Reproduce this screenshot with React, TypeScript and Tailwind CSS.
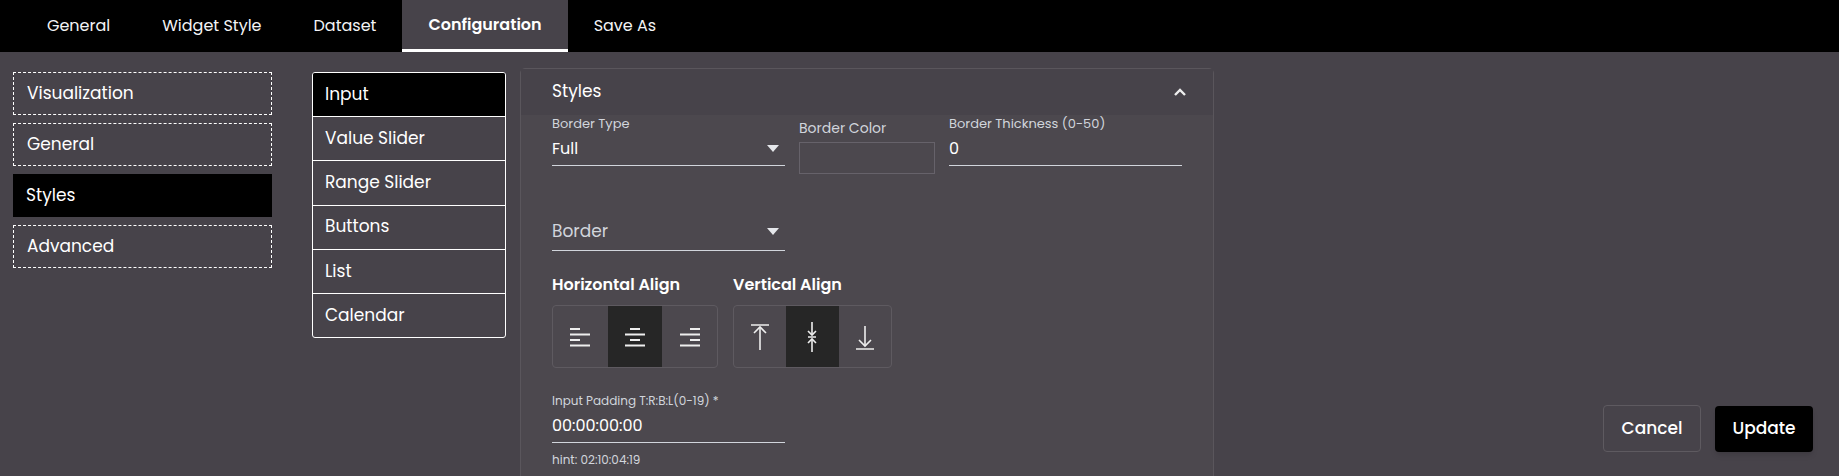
import React from 'react';

const font = { fontFamily: 'Poppins, Inter, "Noto Sans", sans-serif' };

const TABS = ['General', 'Widget Style', 'Dataset', 'Configuration', 'Save As'];
const SECTIONS = ['Visualization', 'General', 'Styles', 'Advanced'];
const ITEMS = ['Input', 'Value Slider', 'Range Slider', 'Buttons', 'List', 'Calendar'];

function Caret() {
  return (
    <svg width="12" height="8" viewBox="0 0 12 8" className="fill-gray-200">
      <path d="M0 0h12L6 7z" />
    </svg>
  );
}

function HIcon({ kind }: { kind: 'l' | 'c' | 'r' }) {
  const rows: Array<[number, number]> =
    kind === 'l' ? [[4, 14], [4, 24], [4, 14], [4, 24]]
    : kind === 'c' ? [[9, 19], [4, 24], [9, 19], [4, 24]]
    : [[14, 24], [4, 24], [14, 24], [4, 24]];
  return (
    <svg width="28" height="28" viewBox="0 0 28 28" stroke="#eee" strokeWidth="1.8">
      {rows.map(([a, b], i) => (
        <line key={i} x1={a} x2={b} y1={6 + i * 5.5} y2={6 + i * 5.5} />
      ))}
    </svg>
  );
}

function VIcon({ kind }: { kind: 't' | 'm' | 'b' }) {
  return (
    <svg width="28" height="32" viewBox="0 0 28 32" stroke="#eee" strokeWidth="1.6" fill="none">
      {kind === 't' && (
        <>
          <line x1="5" x2="23" y1="4" y2="4" />
          <line x1="14" x2="14" y1="6" y2="29" />
          <path d="M8 12l6-6 6 6" />
        </>
      )}
      {kind === 'm' && (
        <>
          <line x1="14" x2="14" y1="1" y2="14" />
          <path d="M10 10l4 4 4-4" />
          <line x1="10" x2="18" y1="16" y2="16" />
          <line x1="14" x2="14" y1="18" y2="31" />
          <path d="M10 22l4-4 4 4" />
        </>
      )}
      {kind === 'b' && (
        <>
          <line x1="14" x2="14" y1="5" y2="25" />
          <path d="M8 19l6 6 6-6" />
          <line x1="5" x2="23" y1="28" y2="28" />
        </>
      )}
    </svg>
  );
}

export default function App() {
  return (
    <div className="h-[476px] w-[1839px] overflow-hidden bg-[#47434a] text-white" style={font}>
      <nav className="flex h-[52px] bg-black">
        <div className="w-[21px]" />
        {TABS.map((t) => {
          const active = t === 'Configuration';
          return (
            <div
              key={t}
              className={`flex h-full items-center px-[26px] text-[16px] ${active ? 'border-b-[3px] border-white bg-[#47434a] font-semibold' : 'text-gray-100'}`}
            >
              {t}
            </div>
          );
        })}
      </nav>

      <div className="flex">
        <div className="ml-[13px] mt-[20px] flex w-[259px] flex-col gap-[8px]">
          {SECTIONS.map((s) => (
            <div
              key={s}
              className={`flex h-[43px] items-center px-[13px] text-[17px] ${s === 'Styles' ? 'bg-black' : 'border border-dashed border-white'}`}
            >
              {s}
            </div>
          ))}
        </div>

        <div className="ml-[40px] mt-[20px] flex h-[266px] w-[194px] flex-col overflow-hidden rounded-[3px] border border-white">
          {ITEMS.map((s, i) => (
            <div
              key={s}
              className={`flex flex-1 items-center px-[12px] text-[17px] ${i > 0 ? 'border-t border-white' : ''} ${i === 0 ? 'bg-black' : ''}`}
            >
              {s}
            </div>
          ))}
        </div>

        <div className="ml-[14px] mt-[16px] h-[420px] w-[694px] rounded-t-[5px] border border-[#5a565c] bg-[#4c484e]">
          <div className="flex h-[46px] items-center justify-between bg-[#47434a] pl-[31px] pr-[26px] text-[17px]">
            <span>Styles</span>
            <svg width="14" height="10" viewBox="0 0 14 10" fill="none" stroke="#eee" strokeWidth="2.4">
              <path d="M2 8l5-5 5 5" />
            </svg>
          </div>

          <div className="pl-[31px]">
            <div className="flex gap-[14px]">
              <div className="w-[233px]">
                <div className="text-[13px] leading-[18px] text-gray-300">Border Type</div>
                <div className="flex h-[33px] items-center justify-between border-b border-gray-300 pr-[6px] text-[16px]">
                  <span>Full</span>
                  <Caret />
                </div>
              </div>
              <div className="w-[136px]">
                <div className="mt-[3px] text-[14px] leading-[20px] text-gray-300">Border Color</div>
                <div className="mt-[4px] h-[32px] border border-[#66626a]" />
              </div>
              <div className="w-[233px]">
                <div className="text-[13px] leading-[18px] text-gray-300">Border Thickness (0-50)</div>
                <div className="flex h-[33px] items-center border-b border-gray-300 text-[16px]">0</div>
              </div>
            </div>

            <div className="mt-[40px] flex h-[37px] w-[233px] items-center justify-between border-b border-gray-300 pr-[6px] text-[17px] text-gray-300">
              <span>Border</span>
              <Caret />
            </div>

            <div className="mt-[22px] flex gap-[15px]">
              <div>
                <div className="text-[16px] font-semibold">Horizontal Align</div>
                <div className="mt-[8px] flex h-[63px] w-[166px] overflow-hidden rounded-[4px] border border-[#5e5a60]">
                  {(['l', 'c', 'r'] as const).map((k) => (
                    <div key={k} className={`flex flex-1 items-center justify-center ${k === 'c' ? 'bg-[#262626]' : ''}`}>
                      <HIcon kind={k} />
                    </div>
                  ))}
                </div>
              </div>
              <div>
                <div className="text-[16px] font-semibold">Vertical Align</div>
                <div className="mt-[8px] flex h-[63px] w-[159px] overflow-hidden rounded-[4px] border border-[#5e5a60]">
                  {(['t', 'm', 'b'] as const).map((k) => (
                    <div key={k} className={`flex flex-1 items-center justify-center ${k === 'm' ? 'bg-[#262626]' : ''}`}>
                      <VIcon kind={k} />
                    </div>
                  ))}
                </div>
              </div>
            </div>

            <div className="mt-[24px] w-[233px]">
              <div className="text-[12px] text-gray-300">Input Padding T:R:B:L(0-19) *</div>
              <div className="flex h-[33px] items-center border-b border-gray-300 text-[16px]">00:00:00:00</div>
              <div className="mt-[8px] text-[12px] text-gray-300">hint: 02:10:04:19</div>
            </div>
          </div>
        </div>

        <div className="flex flex-1 items-end justify-end gap-[14px] pb-[36px] pr-[26px]">
          <button className="h-[47px] w-[98px] rounded-[4px] border border-[#5e5a60] text-[17px] font-medium">Cancel</button>
          <button className="h-[46px] w-[98px] rounded-[4px] bg-black text-[17px] font-medium shadow-md">Update</button>
        </div>
      </div>
    </div>
  );
}
